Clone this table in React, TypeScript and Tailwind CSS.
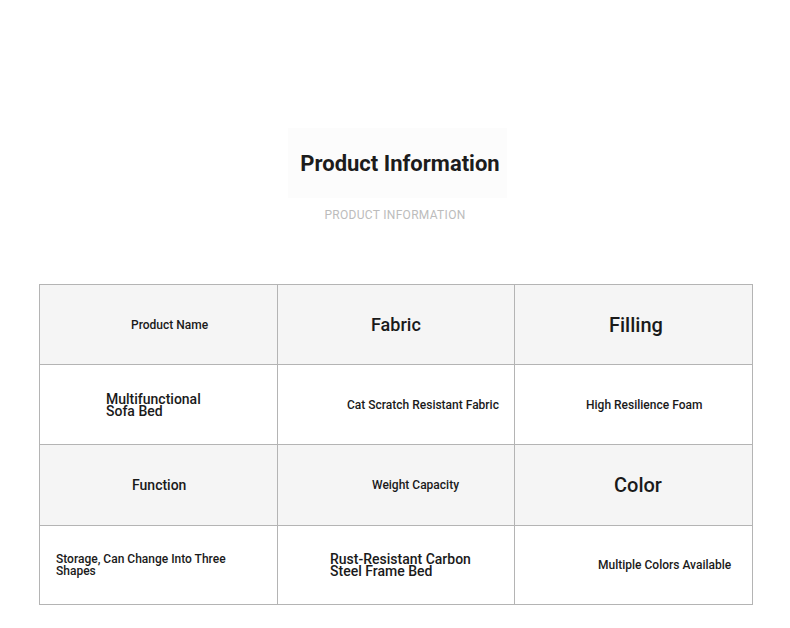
const cells = [
  { text: "Product Name", head: true, cls: "pl-[91px] text-[12px]" },
  { text: "Fabric", head: true, cls: "pl-[93px] text-[18px]" },
  { text: "Filling", head: true, cls: "pl-[94px] text-[20px]" },
  { text: "Multifunctional Sofa Bed", head: false, cls: "pl-[66px] text-[14px] leading-[12px] w-[190px]" },
  { text: "Cat Scratch Resistant Fabric", head: false, cls: "pl-[69px] text-[12px]" },
  { text: "High Resilience Foam", head: false, cls: "pl-[71px] text-[12px]" },
  { text: "Function", head: true, cls: "pl-[92px] text-[14px]" },
  { text: "Weight Capacity", head: true, cls: "pl-[94px] text-[12px]" },
  { text: "Color", head: true, cls: "pl-[99px] text-[20px]" },
  { text: "Storage, Can Change Into Three Shapes", head: false, cls: "pl-[16px] text-[12px] leading-[12px] w-[200px]" },
  { text: "Rust-Resistant Carbon Steel Frame Bed", head: false, cls: "pl-[52px] text-[14px] leading-[12px] w-[200px]" },
  { text: "Multiple Colors Available", head: false, cls: "pl-[83px] text-[12px]" },
]

const rowHeights = ["h-[79px]", "h-[80px]", "h-[81px]", "h-[79px]"]

export default function App() {
  return (
    <div className="min-h-[628px] bg-white font-['Roboto',sans-serif] text-[#1a1a1a]">
      <div className="flex flex-col items-center pt-[128px]">
        <div className="w-[219px] h-[70px] bg-[#fcfcfc] flex items-center justify-center ml-[5px]">
          <h1 className="text-[22px] font-bold text-[#1c1c1c] mt-[1px] pl-[5px]">Product Information</h1>
        </div>
        <div className="mt-[8px] mb-[1px] text-[12px] text-[#bcbcbc] tracking-[0.3px]">PRODUCT INFORMATION</div>
      </div>
      <div className="ml-[39px] w-[714px] mt-[59px] border border-[#b4b4b4] grid grid-cols-[237px_1px_236px_1px_237px]">
        {[0, 1, 2, 3].map((r) => (
          <div key={r} className="contents">
            {[0, 1, 2].map((c) => {
              const cell = cells[r * 3 + c]
              return (
                <div key={c} className="contents">
                  <div
                    className={`${r > 0 ? "border-t border-[#b4b4b4]" : ""} ${rowHeights[r]} ${
                      cell.head ? "bg-[#f5f5f5]" : "bg-white"
                    } flex items-center`}
                  >
                    <div className={`${cell.cls} font-medium`}>{cell.text}</div>
                  </div>
                  {c < 2 && <div className="bg-[#b4b4b4]" />}
                </div>
              )
            })}
          </div>
        ))}
      </div>
    </div>
  )
}
